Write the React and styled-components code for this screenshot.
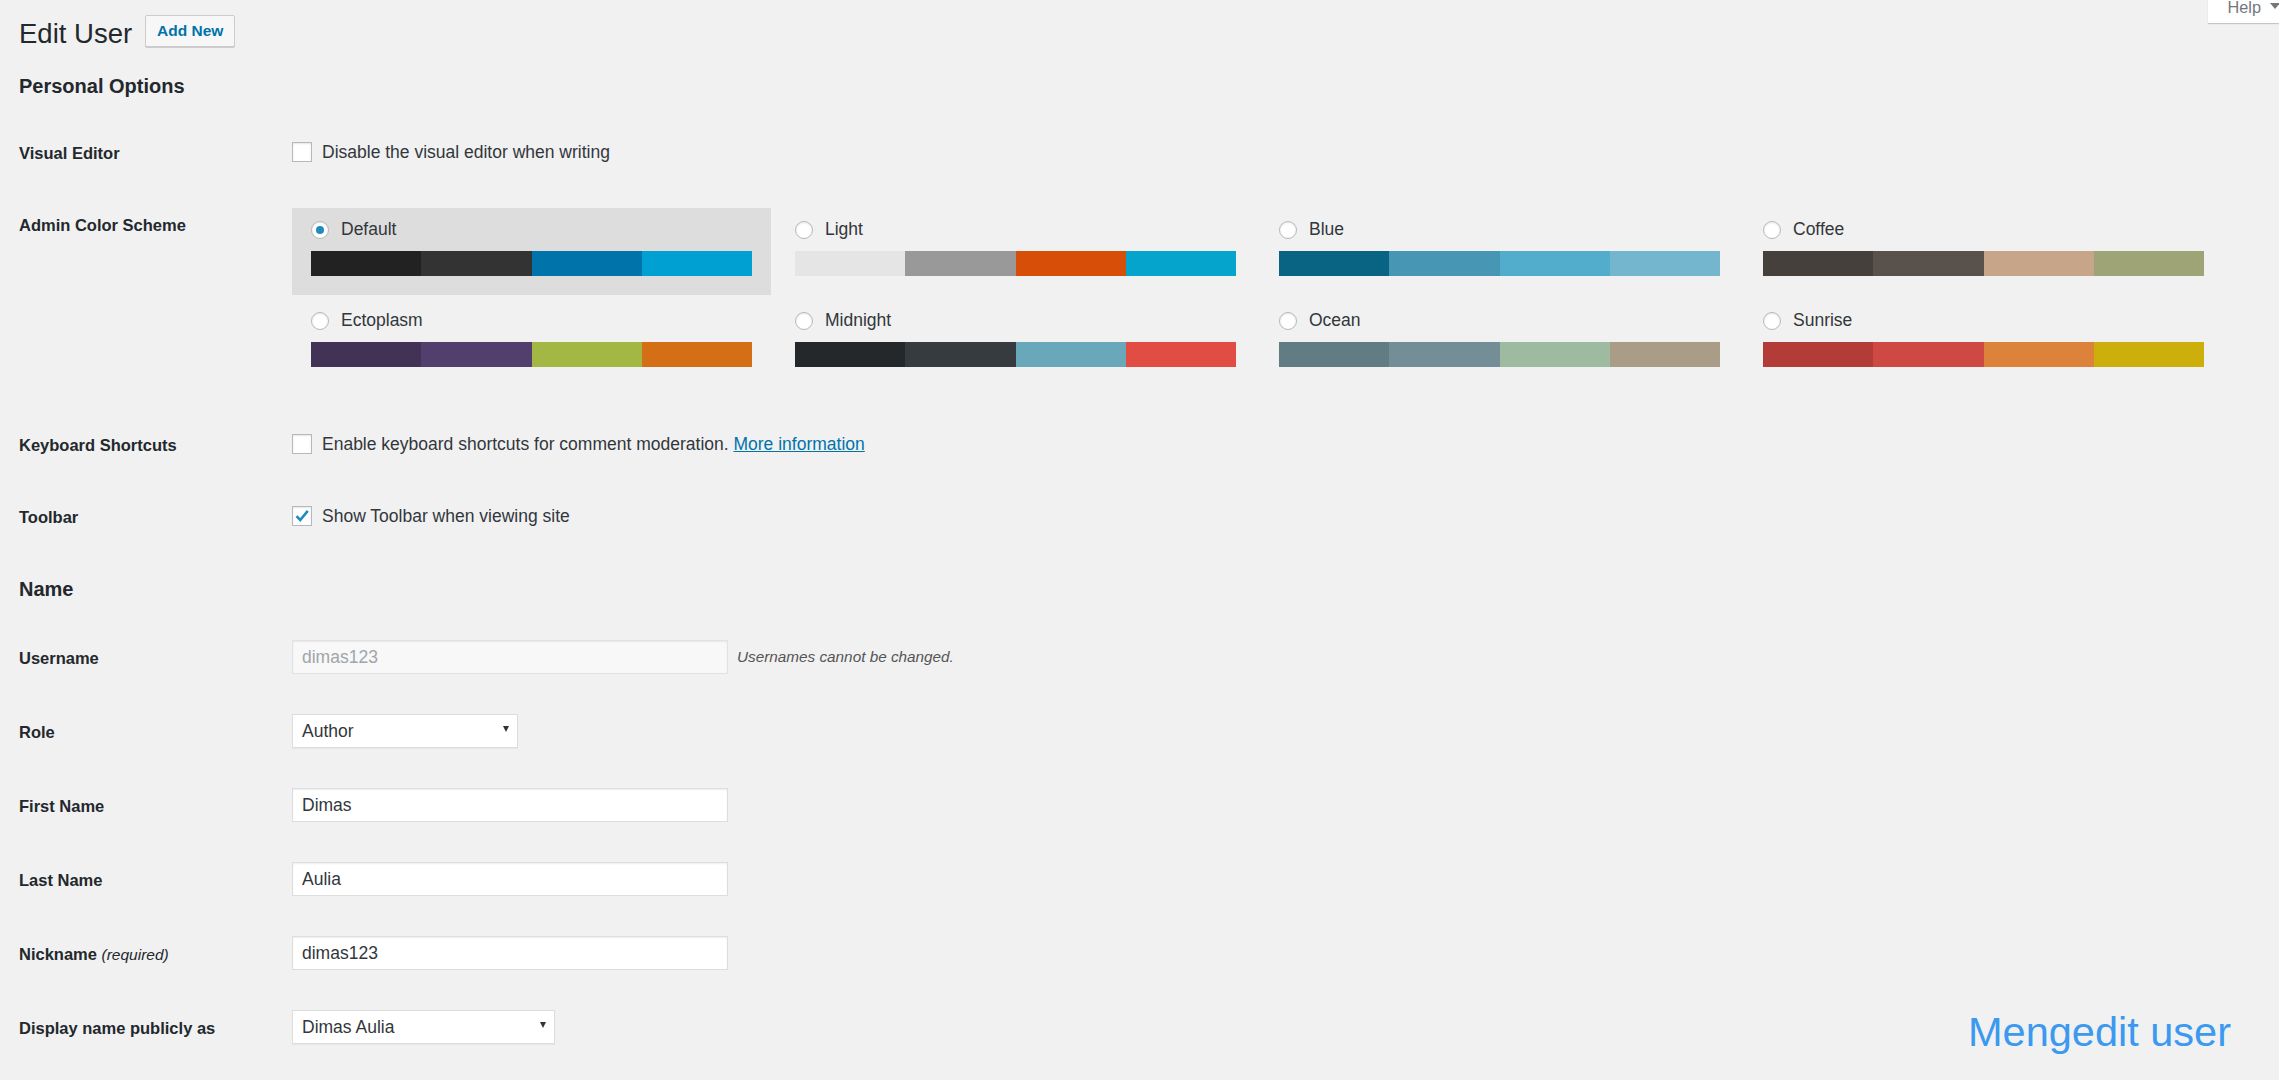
import React from 'react';
import styled, { createGlobalStyle } from 'styled-components';

const GlobalStyle = createGlobalStyle`
  html, body {
    margin: 0;
    padding: 0;
    background: #f1f1f1;
  }
  body {
    font-family: "Liberation Sans", Arial, sans-serif;
    color: #23282d;
  }
  * {
    box-sizing: border-box;
  }
`;

const Page = styled.div`
  position: relative;
  display: flex;
  flex-direction: column;
  height: 1080px;
  overflow: hidden;
  padding-left: 19px;
  background: #f1f1f1;
`;

// header
const TitleRow = styled.div`
  display: flex;
  align-items: flex-start;
  margin-bottom: 4px;
`;

const TitleGroup = styled.div`
  display: flex;
  align-items: flex-start;
  margin-top: 15px;
`;

const PageTitle = styled.h1`
  margin: 3px 0 0;
  font-size: 27.5px;
  font-weight: 400;
  line-height: 31px;
  color: #23282d;
`;

const AddNewButton = styled.a`
  display: flex;
  align-items: center;
  height: 32px;
  margin-left: 13px;
  padding: 0 11px;
  border: 1px solid #ccc;
  border-radius: 2px;
  background: #f7f7f7;
  box-shadow: 0 1px 0 #ccc;
  color: #0073aa;
  font-size: 15.5px;
  font-weight: 700;
  text-decoration: none;
`;

const HelpTab = styled.div`
  display: flex;
  align-items: flex-start;
  gap: 9px;
  height: 23px;
  margin-left: auto;
  margin-right: -13px;
  padding: 0 12px 0 20px;
  background: #fff;
  box-shadow: 0 1px 1px rgba(0, 0, 0, 0.18);
  color: #72777c;
  font-size: 16.25px;
  line-height: 15px;
`;

const HelpArrow = styled.span`
  width: 0;
  height: 0;
  margin-top: 3px;
  border-left: 5px solid transparent;
  border-right: 5px solid transparent;
  border-top: 6px solid #72777c;
`;

const SectionTitle = styled.h2`
  margin: ${p => p.$top}px 0 18px;
  font-size: 20px;
  font-weight: 700;
  line-height: 26px;
  color: #23282d;
`;

// form rows
const FormRow = styled.div`
  display: grid;
  grid-template-columns: 273px 1fr;
  min-height: ${p => p.$height}px;
`;

const RowLabel = styled.div`
  padding-top: ${p => p.$offset}px;
  font-size: 16.5px;
  font-weight: 700;
  line-height: 22px;
  color: #23282d;
`;

const Required = styled.span`
  font-size: 15.5px;
  font-weight: 400;
  font-style: italic;
`;

const RowField = styled.div`
  display: flex;
  align-items: ${p => (p.$center ? 'center' : 'flex-start')};
  flex-direction: ${p => (p.$column ? 'column' : 'row')};
  padding: ${p => p.$pad}px 0;
`;

const CheckLine = styled.label`
  display: flex;
  align-items: center;
  gap: 10px;
  margin-top: 6px;
  font-size: 17.5px;
  line-height: 20px;
  color: #32373c;
`;

const CheckBox = styled.span`
  display: flex;
  align-items: center;
  justify-content: center;
  flex-shrink: 0;
  width: 20px;
  height: 20px;
  border: 1px solid #b4b9be;
  background: #fff;
  box-shadow: inset 0 1px 2px rgba(0, 0, 0, 0.1);
`;

const MoreLink = styled.a`
  color: #0073aa;
  text-decoration: underline;
`;

// color schemes
const SchemeGrid = styled.div`
  display: grid;
  grid-template-columns: repeat(4, 479px);
  column-gap: 5px;
  row-gap: 4px;
  padding-bottom: 4px;
`;

const SchemeOption = styled.div`
  padding: 6px 19px 19px;
  background: ${p => (p.$selected ? '#dddddd' : 'transparent')};
`;

const SchemeLabel = styled.div`
  display: flex;
  align-items: center;
  gap: 12px;
  height: 31px;
  margin-bottom: 6px;
  font-size: 17.5px;
  color: #32373c;
`;

const Radio = styled.span`
  display: flex;
  align-items: center;
  justify-content: center;
  width: 18px;
  height: 18px;
  border: 1px solid #b4b9be;
  border-radius: 50%;
  background: #fff;
  box-shadow: inset 0 1px 2px rgba(0, 0, 0, 0.1);

  &::before {
    content: '';
    width: 8px;
    height: 8px;
    border-radius: 50%;
    background: ${p => (p.$checked ? '#1e8cbe' : 'transparent')};
  }
`;

const Palette = styled.div`
  display: grid;
  grid-template-columns: repeat(4, 1fr);
  height: 25px;
`;

const Swatch = styled.span`
  background: ${p => p.$color};
`;

// inputs
const TextInput = styled.input`
  width: 436px;
  height: 34px;
  margin: 0;
  padding: 0 9px;
  border: 1px solid ${p => (p.disabled ? '#e2e2e2' : '#ddd')};
  border-radius: 0;
  background: ${p => (p.disabled ? '#f8f8f8' : '#fff')};
  box-shadow: inset 0 1px 2px rgba(0, 0, 0, 0.07);
  color: ${p => (p.disabled ? '#a0a5aa' : '#32373c')};
  font-family: "Liberation Sans", Arial, sans-serif;
  font-size: 17.5px;
  outline: none;
`;

const Description = styled.span`
  margin-left: 9px;
  font-size: 15.3px;
  font-style: italic;
  color: #555;
`;

const SelectBox = styled.div`
  display: flex;
  align-items: center;
  justify-content: space-between;
  width: ${p => p.$width}px;
  height: 34px;
  padding: 0 8px 0 9px;
  border: 1px solid #ddd;
  background: #fff;
  box-shadow: 0 1px 1px rgba(0, 0, 0, 0.04);
  color: #32373c;
  font-size: 17.5px;
`;

const SelectArrow = styled.span`
  width: 0;
  height: 0;
  margin-top: -4px;
  border-left: 3.5px solid transparent;
  border-right: 3.5px solid transparent;
  border-top: 6px solid #333;
`;

const Watermark = styled.div`
  position: absolute;
  top: 1011px;
  right: 48px;
  font-size: 41.5px;
  line-height: 41.5px;
  color: #3b99f0;
`;

const schemes = [
  { name: 'Default', colors: ['#222222', '#333333', '#0073aa', '#00a0d2'], selected: true },
  { name: 'Light', colors: ['#e5e5e5', '#999999', '#d64e07', '#04a4cc'] },
  { name: 'Blue', colors: ['#096484', '#4796b3', '#52accc', '#74b6ce'] },
  { name: 'Coffee', colors: ['#46403c', '#59524c', '#c7a589', '#9ea476'] },
  { name: 'Ectoplasm', colors: ['#413256', '#523f6d', '#a3b745', '#d46f15'] },
  { name: 'Midnight', colors: ['#25282b', '#363b3f', '#69a8bb', '#e14d43'] },
  { name: 'Ocean', colors: ['#627c83', '#738e96', '#9ebaa0', '#aa9d88'] },
  { name: 'Sunrise', colors: ['#b43c38', '#cf4944', '#dd823b', '#ccaf0b'] },
];

const CheckMark = () => (
  <svg width="16" height="16" viewBox="0 0 16 16">
    <path d="M2.5 8.2 L6.2 12 L13.8 2.8" fill="none" stroke="#1e8cbe" strokeWidth="2.6" />
  </svg>
);

const CheckRow = ({ label, checked, children }) => (
  <FormRow $height={72}>
    <RowLabel $offset={25}>{label}</RowLabel>
    <RowField $pad={19}>
      <CheckLine>
        <CheckBox>{checked && <CheckMark />}</CheckBox>
        <span>{children}</span>
      </CheckLine>
    </RowField>
  </FormRow>
);

const InputRow = ({ label, children }) => (
  <FormRow $height={74}>
    <RowLabel $offset={27}>{label}</RowLabel>
    <RowField $pad={20} $center>
      {children}
    </RowField>
  </FormRow>
);

const App = () => {
  return (
    <Page>
      <GlobalStyle />
      <TitleRow>
        <TitleGroup>
          <PageTitle>Edit User</PageTitle>
          <AddNewButton href="#">Add New</AddNewButton>
        </TitleGroup>
        <HelpTab>
          <span>Help</span>
          <HelpArrow />
        </HelpTab>
      </TitleRow>

      <SectionTitle $top={20}>Personal Options</SectionTitle>

      <CheckRow label="Visual Editor">Disable the visual editor when writing</CheckRow>

      <FormRow $height={72}>
        <RowLabel $offset={25}>Admin Color Scheme</RowLabel>
        <RowField $pad={19} $column>
          <SchemeGrid>
            {schemes.map(s => (
              <SchemeOption key={s.name} $selected={s.selected}>
                <SchemeLabel>
                  <Radio $checked={s.selected} />
                  <span>{s.name}</span>
                </SchemeLabel>
                <Palette>
                  {s.colors.map(c => (
                    <Swatch key={c} $color={c} />
                  ))}
                </Palette>
              </SchemeOption>
            ))}
          </SchemeGrid>
        </RowField>
      </FormRow>

      <CheckRow label="Keyboard Shortcuts">
        Enable keyboard shortcuts for comment moderation. <MoreLink href="#">More information</MoreLink>
      </CheckRow>

      <CheckRow label="Toolbar" checked>
        Show Toolbar when viewing site
      </CheckRow>

      <SectionTitle $top={23}>Name</SectionTitle>

      <InputRow label="Username">
        <TextInput disabled defaultValue="dimas123" />
        <Description>Usernames cannot be changed.</Description>
      </InputRow>

      <InputRow label="Role">
        <SelectBox $width={226}>
          <span>Author</span>
          <SelectArrow />
        </SelectBox>
      </InputRow>

      <InputRow label="First Name">
        <TextInput defaultValue="Dimas" />
      </InputRow>

      <InputRow label="Last Name">
        <TextInput defaultValue="Aulia" />
      </InputRow>

      <InputRow
        label={
          <>
            Nickname <Required>(required)</Required>
          </>
        }
      >
        <TextInput defaultValue="dimas123" />
      </InputRow>

      <InputRow label="Display name publicly as">
        <SelectBox $width={263}>
          <span>Dimas Aulia</span>
          <SelectArrow />
        </SelectBox>
      </InputRow>

      <Watermark>Mengedit user</Watermark>
    </Page>
  );
};

export default App;
